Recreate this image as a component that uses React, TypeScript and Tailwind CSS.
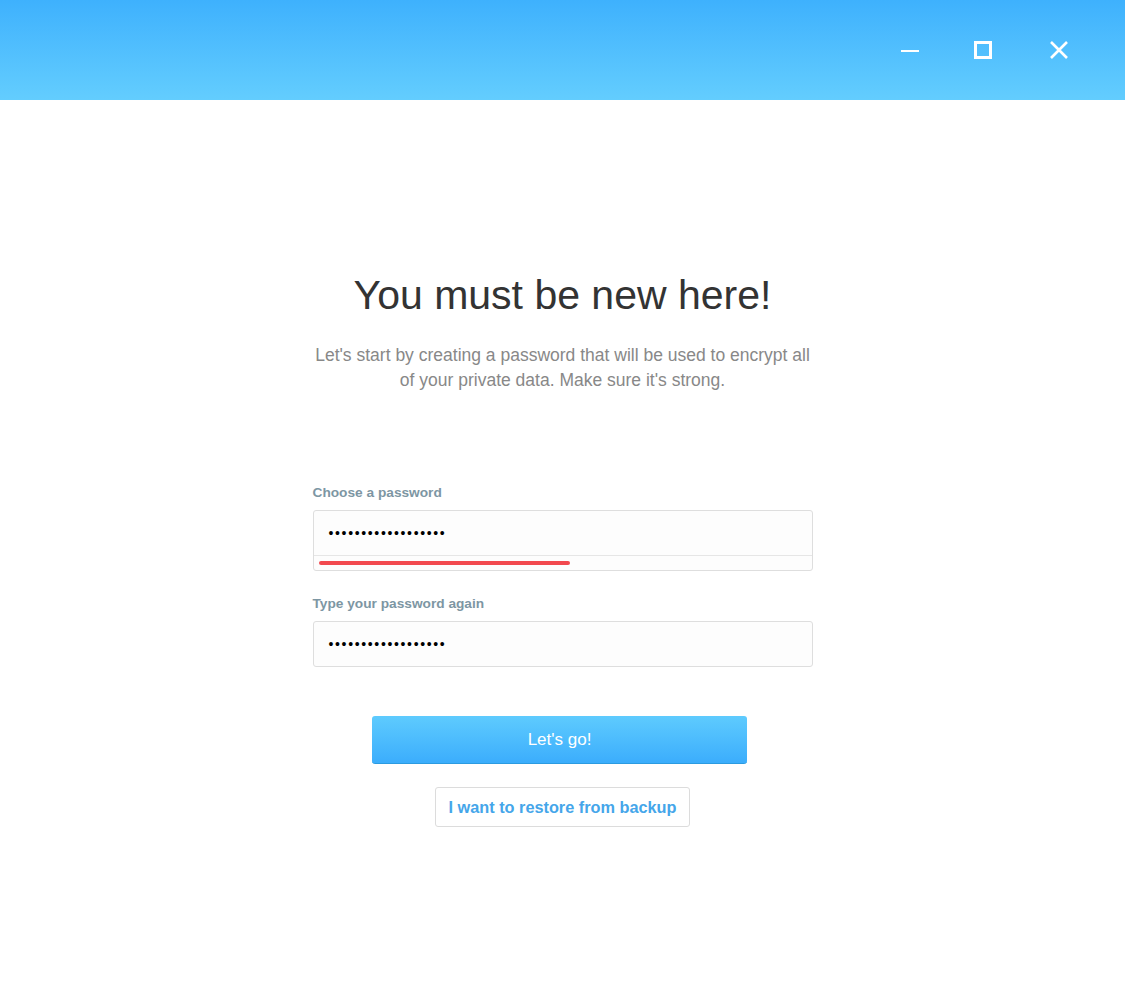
const dots = '•'.repeat(18)

function PasswordField({ label, strength }: { label: string; strength?: number }) {
  return (
    <div className="flex flex-col">
      <label className="text-[13.7px] font-bold text-[#7d96a3] leading-4 mb-[9px]">{label}</label>
      <div className="border border-[#dedede] rounded-[3px] bg-[#fdfdfd]">
        <div className="h-[44px] flex items-center px-[15px]">
          <span className="text-[14px] tracking-[1.65px] text-black leading-none">{dots}</span>
        </div>
        {strength !== undefined && (
          <div className="border-t border-[#e6e6e6] h-[15px] flex items-center px-[5px]">
            <div className="h-[4px] rounded-full bg-[#f2494f]" style={{ width: `${strength}%` }} />
          </div>
        )}
      </div>
    </div>
  )
}

export default function App() {
  return (
    <div className="w-[1125px] h-[1000px] bg-white flex flex-col font-['Liberation_Sans',Arial,sans-serif]">
      {/* Title bar */}
      <div className="h-[100px] bg-gradient-to-b from-[#3eb1fd] to-[#63cdfe] flex items-center justify-end pr-[56px]">
        <svg width="20" height="20" viewBox="0 0 20 20" className="text-white mr-[54px] mt-[1px]">
          <path d="M2 10h18" stroke="currentColor" strokeWidth="2" />
        </svg>
        <svg width="20" height="20" viewBox="0 0 20 20" className="text-white mr-[56px]">
          <rect x="2.5" y="2.5" width="15" height="15" fill="none" stroke="currentColor" strokeWidth="3" />
        </svg>
        <svg width="20" height="20" viewBox="0 0 20 20" className="text-white">
          <path d="M2 2l16 16M18 2L2 18" stroke="currentColor" strokeWidth="2.6" />
        </svg>
      </div>

      {/* Content */}
      <div className="flex flex-col items-center pt-[170px]">
        <h1 className="text-[41px] leading-[50px] text-[#333] text-center">You must be new here!</h1>
        <p className="mt-[23px] w-[500px] text-[17.5px] leading-[25px] text-[#888] text-center">
          Let's start by creating a password that will be used to encrypt all of your private data. Make sure it's strong.
        </p>

        <div className="w-[500px] mt-[92px] flex flex-col gap-[25px]">
          <PasswordField label="Choose a password" strength={51.6} />
          <PasswordField label="Type your password again" />
        </div>

        <button className="mt-[49px] -ml-[6px] w-[375px] h-[48px] rounded-[3px] bg-gradient-to-b from-[#5ecbfe] to-[#3badfc] text-white text-[17px] border-b border-[#2c9be0]">
          Let's go!
        </button>

        <button className="mt-[23px] h-[40px] px-[13px] border border-[#dcdcdc] rounded-[3px] bg-white text-[#45a6ea] text-[16.3px] font-bold">
          I want to restore from backup
        </button>
      </div>
    </div>
  )
}
